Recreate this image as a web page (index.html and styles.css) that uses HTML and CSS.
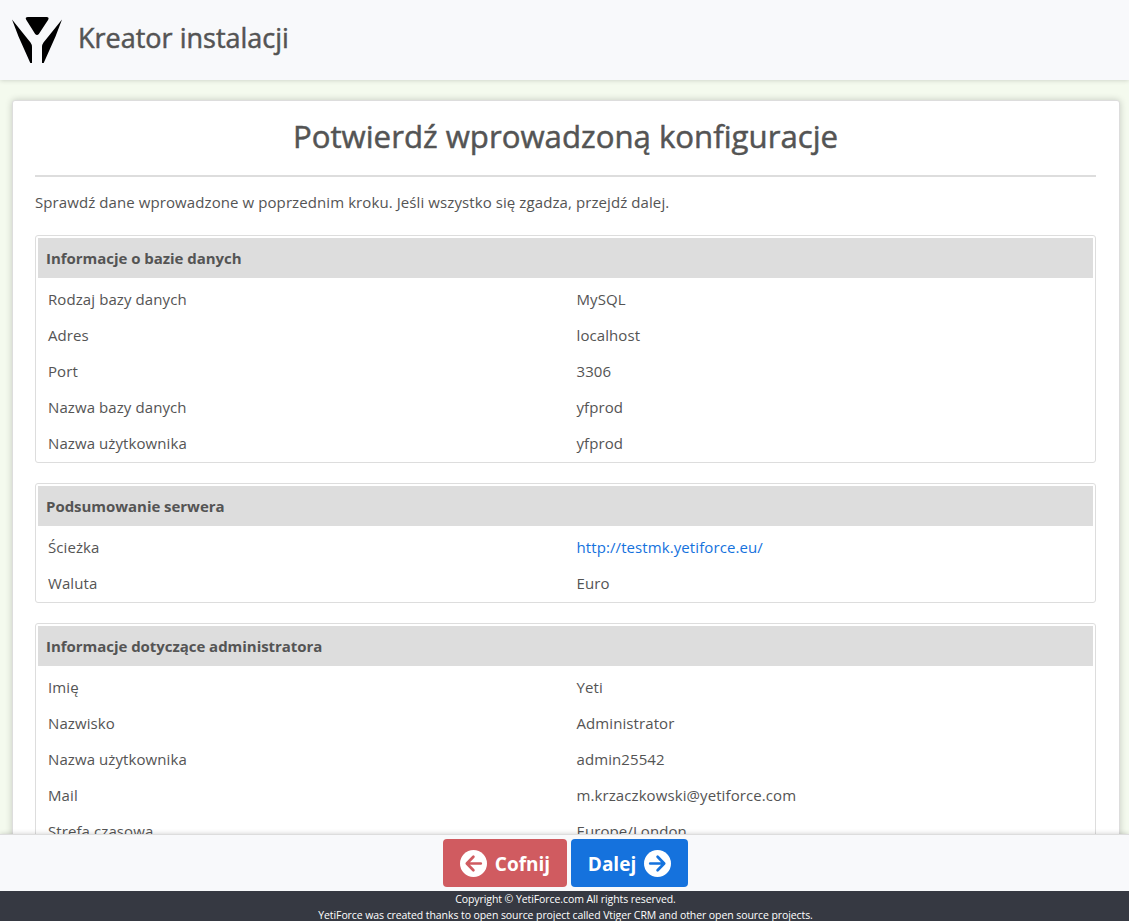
FILE: index.html
```html
<!DOCTYPE html>
<html lang="pl">
<head>
<meta charset="utf-8">
<title>Kreator instalacji</title>
<link rel="stylesheet" href="styles.css">
</head>
<body>
<header class="topbar">
  <svg class="logo" width="50" height="47" viewBox="0 0 50 47" aria-hidden="true"><path d="M16 0H34.500Q37.500 0 36.200 2.800L27 16.700Q25 19.200 23 16.700L14.200 2.800Q12.700 0 16 0zM0 2.500L18.500 25.500Q20 27.500 20 30V46H18.300L6.500 19.500zM50 2.500L31.500 25.500Q30 27.500 30 30V46H31.700L43.500 19.500z"/></svg>
  <h3 class="brand">Kreator instalacji</h3>
</header>
<main class="content">
  <div class="panel">
    <h2 class="title">Potwierdź wprowadzoną konfiguracje</h2>
    <p class="intro">Sprawdź dane wprowadzone w poprzednim kroku. Jeśli wszystko się zgadza, przejdź dalej.</p>
    <section class="card">
      <h4 class="card-head">Informacje o bazie danych</h4>
      <dl class="rows">
        <dt>Rodzaj bazy danych</dt><dd>MySQL</dd>
        <dt>Adres</dt><dd>localhost</dd>
        <dt>Port</dt><dd>3306</dd>
        <dt>Nazwa bazy danych</dt><dd>yfprod</dd>
        <dt>Nazwa użytkownika</dt><dd>yfprod</dd>
      </dl>
    </section>
    <section class="card">
      <h4 class="card-head">Podsumowanie serwera</h4>
      <dl class="rows">
        <dt>Ścieżka</dt><dd><a class="link" href="#">http://testmk.yetiforce.eu/</a></dd>
        <dt>Waluta</dt><dd>Euro</dd>
      </dl>
    </section>
    <section class="card">
      <h4 class="card-head">Informacje dotyczące administratora</h4>
      <dl class="rows">
        <dt>Imię</dt><dd>Yeti</dd>
        <dt>Nazwisko</dt><dd>Administrator</dd>
        <dt>Nazwa użytkownika</dt><dd>admin25542</dd>
        <dt>Mail</dt><dd>m.krzaczkowski@yetiforce.com</dd>
        <dt>Strefa czasowa</dt><dd>Europe/London</dd>
      </dl>
    </section>
  </div>
</main>
<div class="actions">
  <button class="btn btn-back"><svg class="icon" viewBox="0 0 27 27" aria-hidden="true"><circle cx="13.500" cy="13.500" r="13.500"/><path d="M20.800 13.500H7.200M13.400 6.700L6.800 13.500L13.400 20.300"/></svg><span>Cofnij</span></button>
  <button class="btn btn-next"><span>Dalej</span><svg class="icon" viewBox="0 0 27 27" aria-hidden="true"><circle cx="13.500" cy="13.500" r="13.500"/><path d="M6.200 13.500H19.800M13.600 6.700L20.200 13.500L13.600 20.300"/></svg></button>
</div>
<footer class="footer">
  <div>Copyright © YetiForce.com All rights reserved.</div>
  <div>YetiForce was created thanks to open source project called Vtiger CRM and other open source projects.</div>
</footer>
</body>
</html>
```
FILE: styles.css
```css
* { box-sizing: border-box; }
body {
  margin: 0;
  height: 921px;
  display: flex;
  flex-direction: column;
  overflow: hidden;
  font-family: "Open Sans", "Noto Sans", sans-serif;
  font-size: 15px;
  letter-spacing: .09px;
  color: #545454;
  background: #f4faee;
}
h2, h3, h4, p, dl, dd { margin: 0; }
.topbar {
  flex: none;
  height: 80px;
  display: flex;
  align-items: center;
  gap: 16px;
  padding: 0 12px 2px;
  background: #f8f9fb;
  box-shadow: 0 0 5px rgba(0, 0, 0, .2);
}
.logo { display: block; margin-top: 3px; }
.brand {
  padding-bottom: 2px;
  font-size: 27px;
  line-height: 34px;
  font-weight: 500;
  letter-spacing: 0;
  -webkit-text-stroke: .5px #545454;
}
.content { flex: 1; min-height: 0; overflow: hidden; padding: 20px 9px 0 12px; }
.panel {
  height: 1000px;
  padding: 13px 23px 0 22px;
  border: 1px solid #ddd;
  border-radius: 3px;
  background: #fff;
  box-shadow: 0 0 7px rgba(0, 0, 0, .2);
}
.title {
  height: 63px;
  border-bottom: 2px solid #ddd;
  text-align: center;
  font-size: 31.2px;
  line-height: 44px;
  font-weight: 500;
  letter-spacing: 0;
  -webkit-text-stroke: .5px #545454;
}
.intro { height: 58px; padding-top: 13px; line-height: 24px; }
.card { margin-bottom: 20px; padding: 2px; border: 1px solid #ddd; border-radius: 3px; }
.card-head {
  height: 40px;
  padding-left: 8px;
  background: #ddd;
  font-size: 15px;
  line-height: 40px;
  font-weight: 700;
  letter-spacing: -.04px;
}
.rows {
  display: grid;
  grid-template-columns: 1fr 1fr;
  grid-auto-rows: 36px;
  margin: 3px 0 -1px;
  line-height: 36px;
}
.rows dt { padding-left: 10px; }
.rows dd { padding-left: 11px; }
.link { color: #1572dd; text-decoration: none; }
.actions {
  position: relative;
  flex: none;
  height: 57px;
  display: flex;
  justify-content: center;
  gap: 4px;
  padding: 4px 0 0 2px;
  border-top: 1px solid #ddd;
  background: #f8f9fb;
  box-shadow: 0 0 5px rgba(0, 0, 0, .2);
}
.btn {
  height: 48px;
  display: flex;
  align-items: center;
  justify-content: center;
  gap: 8px;
  padding: 0;
  border: 0;
  border-radius: 4px;
  color: #fff;
  font: 700 19px/30px "Open Sans", sans-serif;
}
.btn span { padding-top: 1px; }
.btn-back { width: 124px; background: #d05b60; }
.btn-next { width: 117px; background: #1572dd; }
.icon { width: 27px; height: 27px; fill: #fff; }
.icon path { fill: none; stroke-width: 2.7; stroke-linecap: round; stroke-linejoin: round; }
.btn-back path { stroke: #d05b60; }
.btn-next path { stroke: #1572dd; }
.footer {
  position: relative;
  flex: none;
  height: 30px;
  padding-left: 2px;
  background: #363942;
  color: #fff;
  text-align: center;
  font-size: 10.5px;
  letter-spacing: -.08px;
  line-height: 16px;
}
```
